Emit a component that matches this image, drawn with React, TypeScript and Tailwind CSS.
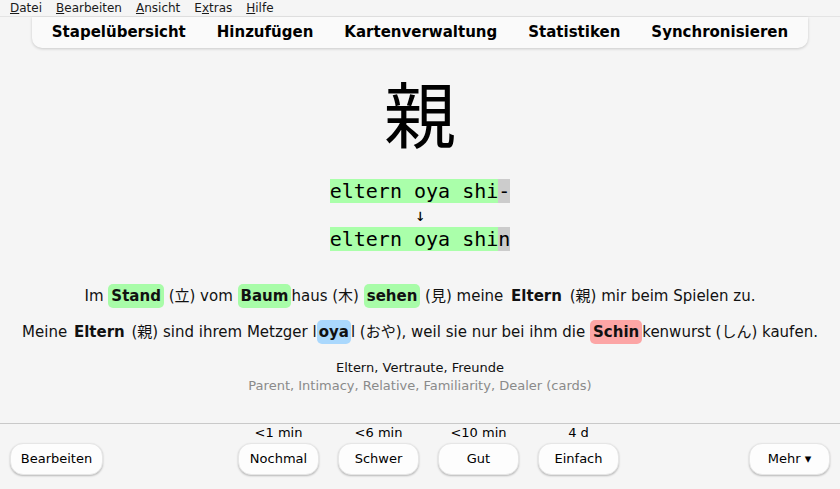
import React from "react";

const sans = "font-['DejaVu_Sans','Noto_Sans_CJK_JP',sans-serif]";

function Hl({ c, children }: { c: string; children: React.ReactNode }) {
  return (
    <span className={`inline-block px-[3px] py-[3px] leading-[18px] rounded-[5px] font-bold ${c}`}>
      {children}
    </span>
  );
}

function AnsBtn({ label, time }: { label: string; time: string }) {
  return (
    <div className="flex flex-col items-center">
      <div className="text-[13px] leading-[18px] mb-px">{time}</div>
      <button className="w-[81px] h-[32px] rounded-[13px] bg-[#fdfdfd] border border-[#e6e6e6] shadow-[0_1px_2px_rgba(0,0,0,0.25)] text-[13px]">
        {label}
      </button>
    </div>
  );
}

export default function App() {
  return (
    <div className={`w-[840px] h-[489px] bg-[#f5f5f5] flex flex-col text-black overflow-hidden ${sans}`}>
      {/* menubar */}
      <div className="h-[17px] flex items-center pl-[3px] text-[12px] leading-[16px] text-[#1a1a1a] border-b border-[#e4e4e4]">
        <span className="px-[7px]"><u>D</u>atei</span>
        <span className="px-[7px]"><u>B</u>earbeiten</span>
        <span className="px-[7px]"><u>A</u>nsicht</span>
        <span className="px-[7px]">E<u>x</u>tras</span>
        <span className="px-[7px]"><u>H</u>ilfe</span>
      </div>
      {/* toolbar */}
      <div className="flex justify-center">
        <div className="h-[31px] bg-[#fafafa] rounded-b-[10px] shadow-[0_1px_3px_rgba(0,0,0,0.18)] flex items-center gap-[31px] px-[20px] text-[15px] font-bold">
          <span>Stapelübersicht</span>
          <span>Hinzufügen</span>
          <span>Kartenverwaltung</span>
          <span>Statistiken</span>
          <span>Synchronisieren</span>
        </div>
      </div>
      {/* kanji */}
      <div className="mt-[27px] h-[72px] text-center text-[72px] leading-none font-['Noto_Sans_CJK_JP',sans-serif]">
        親
      </div>
      {/* typed answer */}
      <div className="mt-[33px] flex flex-col items-center font-['DejaVu_Sans_Mono',monospace] text-[20px]">
        <div className="leading-[23px] h-[23px]">
          <span className="bg-[#aaffaa]">eltern oya shi</span>
          <span className="bg-[#cccccc]">-</span>
        </div>
        <div className="leading-[25px] h-[25px] text-[17px]">↓</div>
        <div className="leading-[23px] h-[23px]">
          <span className="bg-[#aaffaa]">eltern oya shi</span>
          <span className="bg-[#cccccc]">n</span>
        </div>
      </div>
      {/* sentences */}
      <div className="mt-[28px] text-[15px] text-center text-[#111]">
        <div className="leading-[35px] h-[36px]">
          Im <Hl c="bg-[#a8fca8]">Stand</Hl> (立) vom <Hl c="bg-[#a8fca8]">Baum</Hl>haus (木) <Hl c="bg-[#a8fca8]">sehen</Hl> (見) meine <Hl c="">Eltern</Hl> (親) mir beim Spielen zu.
        </div>
        <div className="leading-[35px] h-[35px]">
          Meine <Hl c="!px-[2px]">Eltern</Hl> (親) sind ihrem Metzger l<Hl c="bg-[#aad8fd] !px-[2px]">oya</Hl>l (おや), weil sie nur bei ihm die <Hl c="bg-[#fca5a5]">Schin</Hl>kenwurst (しん) kaufen.
        </div>
      </div>
      {/* definitions */}
      <div className="mt-[9px] text-center text-[13px] leading-[18px]">
        <div className="text-[#111]">Eltern, Vertraute, Freunde</div>
        <div className="text-[#8a8a8a]">Parent, Intimacy, Relative, Familiarity, Dealer (cards)</div>
      </div>
      {/* bottom bar */}
      <div className="mt-auto h-[66px] border-t border-[#c9c9c9] flex items-end px-[10px] pb-[14px]">
        <button className="w-[93px] h-[32px] rounded-[13px] bg-[#fdfdfd] border border-[#e6e6e6] shadow-[0_1px_2px_rgba(0,0,0,0.25)] text-[13px]">
          Bearbeiten
        </button>
        <div className="ml-[135px] flex gap-[19px]">
          <AnsBtn time="<1 min" label="Nochmal" />
          <AnsBtn time="<6 min" label="Schwer" />
          <AnsBtn time="<10 min" label="Gut" />
          <AnsBtn time="4 d" label="Einfach" />
        </div>
        <button className="ml-auto w-[81px] h-[32px] rounded-[13px] bg-[#fdfdfd] border border-[#e6e6e6] shadow-[0_1px_2px_rgba(0,0,0,0.25)] text-[13px]">
          Mehr ▾
        </button>
      </div>
    </div>
  );
}
